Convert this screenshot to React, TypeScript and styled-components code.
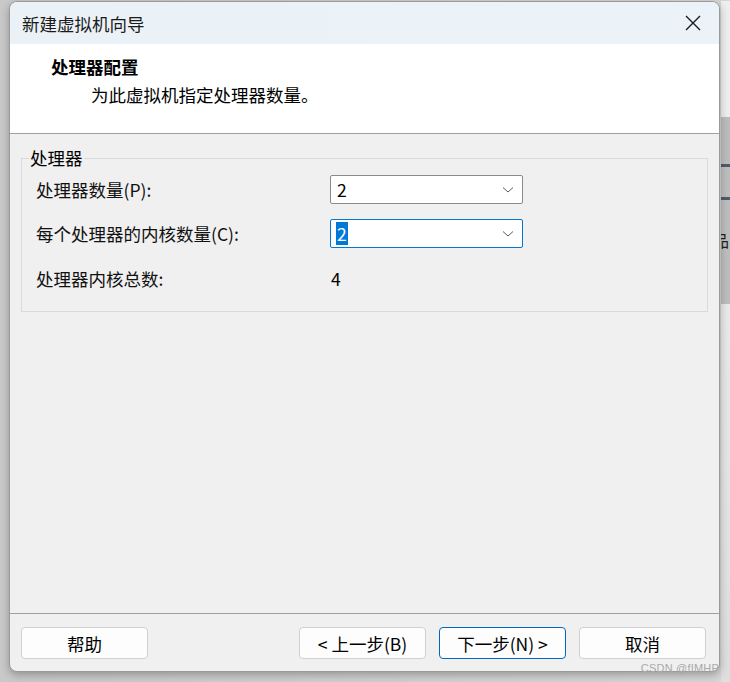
import styled, { createGlobalStyle } from "styled-components";

const GlobalStyle = createGlobalStyle`
  html, body {
    margin: 0;
    padding: 0;
    background: #d2d2d2;
  }
  body {
    font-family: "Noto Sans CJK SC", "Noto Sans", "Liberation Sans", sans-serif;
    color: #1b1b1b;
  }
  * {
    box-sizing: border-box;
  }
`;

const Page = styled.div`
  position: relative;
  width: 730px;
  height: 682px;
  display: flex;
  align-items: flex-start;
  padding: 1px 0 0 9px;
  background: linear-gradient(90deg, #c9c9c9 0%, #d6d6d6 100%);
  overflow: hidden;
`;

const Window = styled.div`
  width: 711px;
  height: 671px;
  flex-shrink: 0;
  display: flex;
  flex-direction: column;
  border: 1px solid #9a9a9a;
  border-radius: 8px;
  overflow: hidden;
  background: #f0f0f0;
  box-shadow: 0 3px 9px rgba(0, 0, 0, 0.28);
  position: relative;
  z-index: 1;
`;

const TitleBar = styled.div`
  height: 42px;
  flex-shrink: 0;
  display: flex;
  align-items: center;
  justify-content: space-between;
  padding: 0 14px 0 12px;
  background: linear-gradient(90deg, #eaf2f8 0%, #ebf3f9 100%);
  font-size: 17.5px;
`;

const CloseButton = styled.button`
  width: 24px;
  height: 24px;
  display: flex;
  align-items: center;
  justify-content: center;
  border: none;
  background: transparent;
  padding: 0;
`;

const Header = styled.div`
  height: 89px;
  flex-shrink: 0;
  background: #ffffff;
  padding: 11px 0 0 41px;
  display: flex;
  flex-direction: column;
  gap: 4px;
`;

const HeaderTitle = styled.div`
  font-size: 17.5px;
  font-weight: 700;
  line-height: 24px;
  color: #000;
`;

const HeaderSubtitle = styled.div`
  font-size: 17.5px;
  line-height: 24px;
  padding-left: 40px;
  color: #000;
`;

const Divider = styled.div`
  height: 1px;
  flex-shrink: 0;
  background: #a0a0a0;
`;

const Body = styled.div`
  flex: 1;
  padding: 12px 11px 0 11px;
`;

const Group = styled.fieldset`
  margin: 0;
  padding: 5px 0 19px 0;
  border: 1px solid #dadada;
  font-size: 17.5px;
`;

const Legend = styled.legend`
  margin-left: 7px;
  padding: 0 1px;
  line-height: 24px;
  color: #000;
`;

const Rows = styled.div`
  display: grid;
  grid-template-columns: 294px 193px;
  grid-auto-rows: 29px;
  row-gap: 15px;
  align-items: center;
  padding-left: 14px;
`;

const Label = styled.div<{ $shift?: number }>`
  line-height: 24px;
  color: #111;
  margin-top: ${(p) => p.$shift || 0}px;
`;

const Value = styled.div`
  padding-left: 1px;
  line-height: 24px;
  margin-top: 2px;
  color: #000;
`;

const Combo = styled.div<{ $focused?: boolean }>`
  height: 29px;
  display: flex;
  align-items: center;
  justify-content: space-between;
  padding: 0 8px 0 5px;
  background: #fff;
  border: 1px solid ${(p) => (p.$focused ? "#0078d7" : "#8a8a8a")};
  border-radius: 2px;
`;

const ComboText = styled.span<{ $selected?: boolean }>`
  line-height: 23px;
  padding: 0 1px;
  color: ${(p) => (p.$selected ? "#fff" : "#000")};
  background: ${(p) => (p.$selected ? "#0078d7" : "transparent")};
`;

const Footer = styled.div`
  height: 57px;
  flex-shrink: 0;
  display: flex;
  justify-content: space-between;
  padding: 13px 13px 0 11px;
`;

const ButtonGroup = styled.div`
  display: flex;
  gap: 13px;
`;

const Button = styled.button<{ $primary?: boolean }>`
  width: 127px;
  height: 32px;
  font-family: inherit;
  font-size: 17.5px;
  color: #000;
  background: #fdfdfd;
  border: 1px solid ${(p) => (p.$primary ? "#0067c0" : "#d0d0d0")};
  border-radius: 4px;
  padding: 0;
  display: flex;
  align-items: center;
  justify-content: center;
`;

const BackStrip = styled.div`
  flex: 1;
  height: 100%;
  display: flex;
  flex-direction: column;
  margin-left: 1px;
`;

const StripPart = styled.div<{ $h: number; $bg: string }>`
  height: ${(p) => p.$h}px;
  flex-shrink: 0;
  background: ${(p) => p.$bg};
  overflow: hidden;
  font-size: 16px;
  line-height: 20px;
  color: #222;
`;

const StripGlyph = styled.div`
  margin-top: 30px;
  margin-left: -8px;
`;

const Watermark = styled.div`
  position: absolute;
  right: 11px;
  bottom: 8px;
  z-index: 2;
  font-family: "Liberation Sans", Arial, sans-serif;
  font-size: 11px;
  color: #a9a9a9;
  letter-spacing: 0.2px;
`;

const Chevron = () => (
  <svg width="12" height="8" viewBox="0 0 12 8">
    <path d="M1 1.5 L6 6 L11 1.5" fill="none" stroke="#5c5c5c" strokeWidth="1" />
  </svg>
);

export default function App() {
  return (
    <>
      <GlobalStyle />
      <Page>
        <Window>
          <TitleBar>
            <span>新建虚拟机向导</span>
            <CloseButton aria-label="关闭">
              <svg width="16" height="16" viewBox="0 0 16 16">
                <path d="M1 1 L15 15 M15 1 L1 15" stroke="#1a1a1a" strokeWidth="1.4" />
              </svg>
            </CloseButton>
          </TitleBar>
          <Header>
            <HeaderTitle>处理器配置</HeaderTitle>
            <HeaderSubtitle>为此虚拟机指定处理器数量。</HeaderSubtitle>
          </Header>
          <Divider />
          <Body>
            <Group>
              <Legend>处理器</Legend>
              <Rows>
                <Label>处理器数量(P):</Label>
                <Combo>
                  <ComboText>2</ComboText>
                  <Chevron />
                </Combo>
                <Label>每个处理器的内核数量(C):</Label>
                <Combo $focused>
                  <ComboText $selected>2</ComboText>
                  <Chevron />
                </Combo>
                <Label $shift={2}>处理器内核总数:</Label>
                <Value>4</Value>
              </Rows>
            </Group>
          </Body>
          <Divider />
          <Footer>
            <Button>帮助</Button>
            <ButtonGroup>
              <Button>&lt; 上一步(B)</Button>
              <Button $primary>下一步(N) &gt;</Button>
              <Button>取消</Button>
            </ButtonGroup>
          </Footer>
        </Window>
        <BackStrip>
          <StripPart $h={116} $bg="#eeeeee" />
          <StripPart $h={47} $bg="#bcbcbc" />
          <StripPart $h={3} $bg="#4f5b67" />
          <StripPart $h={30} $bg="#bdbdbd" />
          <StripPart $h={3} $bg="#4f5b67" />
          <StripPart $h={104} $bg="#bdbdbd">
            <StripGlyph>品</StripGlyph>
          </StripPart>
          <StripPart $h={379} $bg="linear-gradient(180deg, #e9e9e9 0%, #dedede 100%)" />
        </BackStrip>
        <Watermark>CSDN @fIMHP</Watermark>
      </Page>
    </>
  );
}
